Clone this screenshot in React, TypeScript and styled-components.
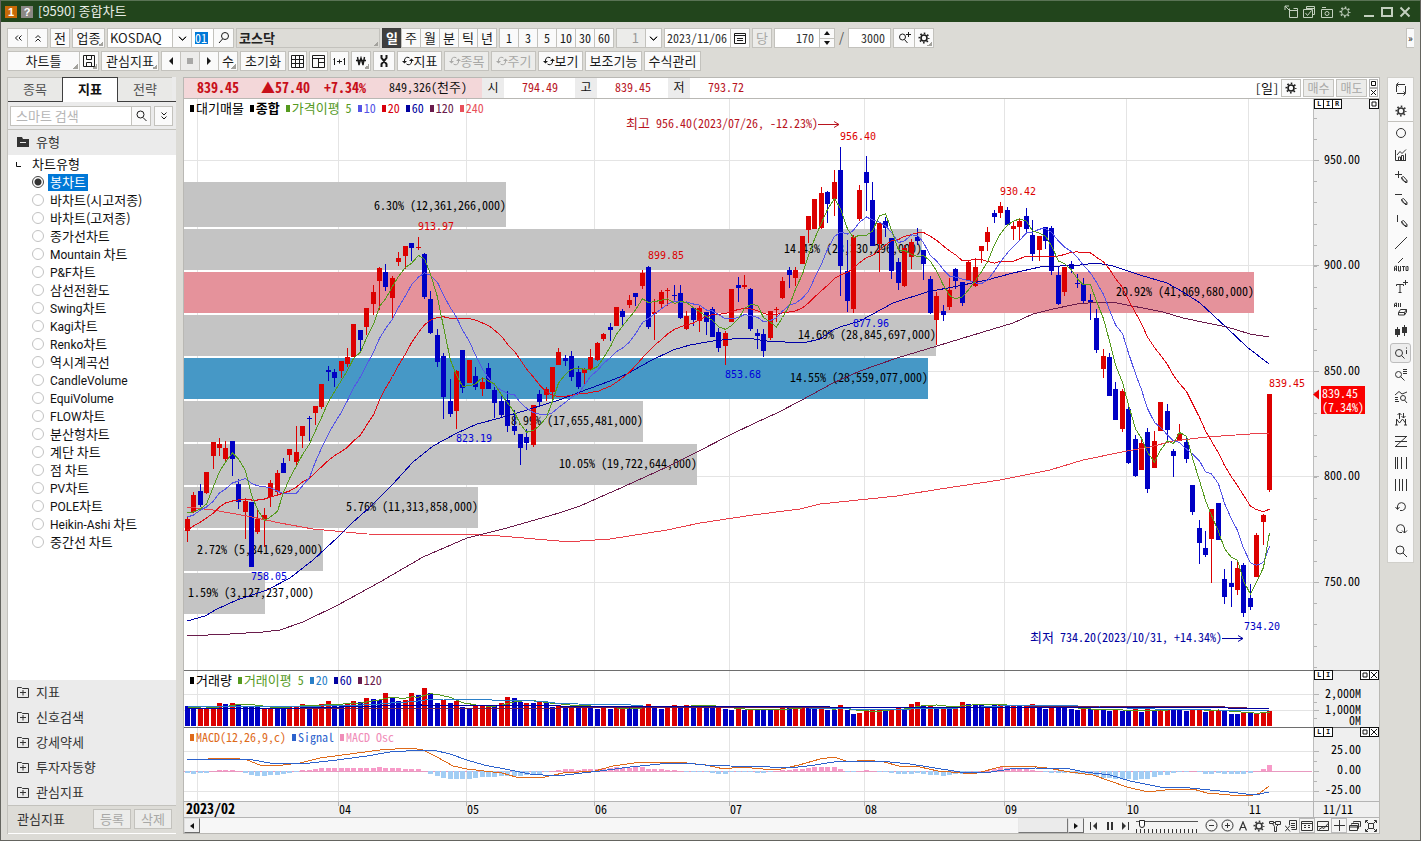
import React, { useState } from 'react';
import styled, { createGlobalStyle, css } from 'styled-components';

const ui = '"Noto Sans CJK KR", "Noto Sans", sans-serif';
const mono = '"Noto Sans Mono CJK KR", "Noto Sans CJK KR", "Liberation Mono", monospace';
const small = '"DejaVu Sans Mono", "Liberation Mono", monospace';

const RED = '#dc0000';
const BLUE = '#0000c4';

const Global = createGlobalStyle`
  * { box-sizing: border-box; }
  body { margin: 0; background: #dcdbd6; font: 13px/16px ${ui}; color: #111; }
  button, input, select { font: inherit; color: inherit; margin: 0; padding: 0; border-radius: 0; }
  svg { display: block; }
`;

/* ---------- frame ---------- */
const Frame = styled.div`
  display: flex;
  flex-direction: column;
  min-height: 100vh;
  min-width: 1100px;
  border: solid #64645f;
  border-width: 0 1px 1px;
  background: #dcdbd6;
`;
const TitleBar = styled.header`
  display: flex;
  align-items: center;
  gap: 4px;
  height: 22px;
  padding: 0 8px 0 4px;
  border-top: 1px solid #5a7355;
  background: #22451c;
  color: #e8ede6;
`;
const Badge = styled.span<{ $bg: string }>`
  width: 12px;
  height: 12px;
  background: ${p => p.$bg};
  color: #fff;
  font: bold 11px/12px "Liberation Sans", sans-serif;
  text-align: center;
`;
const Title = styled.h1`
  margin: 0 auto 0 1px;
  padding-bottom: 2px;
  font-size: 13px;
  line-height: 18px;
  font-weight: 400;
`;
const TitleButton = styled.button`
  display: grid;
  place-items: center;
  width: 14px;
  height: 20px;
  border: 0;
  background: none;
  color: #c3d0bf;
`;
const Spacer = styled.span`width: 2px;`;

/* ---------- tool bars ---------- */
const Bars = styled.div`
  display: flex;
  flex-direction: column;
  gap: 3px;
  padding: 6px 6px 6px;
`;
const Bar = styled.div`
  display: flex;
  gap: 2px;
  height: 20px;
`;
const Group = styled.div`
  display: flex;
  & > * + * { margin-left: -1px; }
`;
const corner = css`
  background-image: linear-gradient(135deg, transparent 50%, #a3a29d 50%);
  background-size: 5px 5px;
  background-position: right 1px bottom 1px;
  background-repeat: no-repeat;
`;
const Tool = styled.button<{ $w?: number; $on?: boolean; $menu?: boolean; $dim?: boolean }>`
  display: flex;
  align-items: center;
  justify-content: center;
  flex: none;
  width: ${p => p.$w ?? 20}px;
  height: 20px;
  border: 1px solid ${p => (p.$on ? '#3c3c3c' : '#c3c2bd')};
  background-color: ${p => (p.$on ? '#3f3f3f' : p.$dim ? '#ececea' : '#fafafa')};
  color: ${p => (p.$on ? '#fff' : p.$dim ? '#a8a8a6' : '#1a1a1a')};
  font-weight: ${p => (p.$on ? 700 : 400)};
  line-height: 18px;
  white-space: nowrap;
  ${p => p.$menu && corner}
`;
const NumTool = styled(Tool)`font: 12px/18px ${mono};`;
const Field = styled.input<{ $w: number; $right?: boolean; $dim?: boolean }>`
  width: ${p => p.$w}px;
  height: 20px;
  padding: 0 ${p => (p.$right ? 5 : 2)}px 2px;
  border: 1px solid #c3c2bd;
  background: ${p => (p.$dim ? '#ececea' : '#fff')};
  color: #333;
  font: 12px/16px ${mono};
  text-align: ${p => (p.$right ? 'right' : 'left')};
  outline: 0;
`;
const NameField = styled(Field)`
  background-color: #dddcd7;
  color: #222;
  font: bold 13px/16px ${ui};
  ${corner}
`;
const Combo = styled.div<{ $w: number; $dim?: boolean }>`
  display: flex;
  align-items: center;
  width: ${p => p.$w}px;
  height: 20px;
  border: 1px solid #c3c2bd;
  background: #fff;
  select {
    flex: 1;
    min-width: 0;
    height: 18px;
    padding: 0 6px 1px 2px;
    border: 0;
    appearance: none;
    background: ${p => (p.$dim ? '#ececea' : '#fff')};
    color: ${p => (p.$dim ? '#9a9a98' : '#222')};
    text-align-last: ${p => (p.$dim ? 'right' : 'left')};
    font: 13px/17px ${ui};
    outline: 0;
  }
`;
const Drop = styled.span<{ $w: number }>`
  display: grid;
  place-items: center;
  width: ${p => p.$w}px;
  height: 18px;
  border-left: 1px solid #c3c2bd;
  background: #fafafa;
`;
const CodeField = styled(Field)`
  padding: 0 3px 2px;
  background: linear-gradient(#0078d7, #0078d7) 3px 3px / 13px 12px no-repeat #fff;
  color: #fff;
`;
const Spin = styled.div`
  display: flex;
  flex-direction: column;
  width: 16px;
  height: 20px;
  border: 1px solid #c3c2bd;
  background: #fafafa;
  button {
    flex: 1;
    display: grid;
    place-items: center;
    border: 0;
    background: none;
  }
  button + button { border-top: 1px solid #c3c2bd; }
`;
const Slash = styled.span`
  width: 9px;
  color: #555;
  font: 13px/18px ${ui};
  text-align: center;
`;
const More = styled.button`
  width: 8px;
  height: 20px;
  margin-left: auto;
  border: 1px solid #c3c2bd;
  border-right: 0;
  background: #fafafa;
  font-size: 10px;
  line-height: 16px;
`;

/* ---------- body ---------- */
const Body = styled.main`
  display: flex;
  align-items: stretch;
  flex: 1;
  gap: 7px;
  padding: 0 6px 6px;
`;
const Side = styled.aside`
  display: flex;
  flex-direction: column;
  flex: none;
  width: 169px;
  border-left: 1px solid #c3c2bd;
  background: #ebebeb;
`;
const Tabs = styled.div`
  display: flex;
  flex: none;
  height: 25px;
  padding-right: 4px;
  background: linear-gradient(#3f3f3f, #3f3f3f) bottom / 100% 1px no-repeat;
`;
const Tab = styled.button<{ $on?: boolean }>`
  flex: 1;
  height: ${p => (p.$on ? 25 : 24)}px;
  padding-bottom: 2px;
  border: solid ${p => (p.$on ? '#3f3f3f' : '#c3c2bd')};
  border-width: ${p => (p.$on ? '1px 1px 0' : '1px 0 0')};
  background: ${p => (p.$on ? '#fff' : '#e9e9e7')};
  color: ${p => (p.$on ? '#111' : '#555')};
  font-weight: ${p => (p.$on ? 700 : 400)};
`;
const SearchRow = styled.div`
  display: flex;
  flex: none;
  gap: 3px;
  padding: 4px 3px 4px 2px;
  height: 28px;
  border-bottom: 1px solid #c3c2bd;
`;
const SearchField = styled(Field)`
  flex: 1;
  min-width: 0;
  padding-left: 5px;
  font: 13px/16px ${ui};
  &::placeholder { color: #b5b5b5; }
`;
const SearchGroup = styled(Group)`flex: 1; min-width: 0;`;
const Fold = styled.button`
  display: flex;
  align-items: center;
  flex: none;
  gap: 6px;
  height: 25px;
  padding: 0 0 2px 8px;
  border: 0;
  background: #ebebeb;
  color: #333;
  text-align: left;
  svg { margin: 0 1px; }
`;
const Tree = styled.fieldset`
  flex: 1;
  margin: 0;
  padding: 0;
  border: 0;
  background: #fff;
`;
const Root = styled.legend`
  display: flex;
  align-items: center;
  gap: 11px;
  float: left;
  width: 100%;
  height: 18px;
  padding: 0 0 0 8px;
`;
const Choice = styled.label`
  display: flex;
  align-items: center;
  clear: both;
  height: 18px;
  padding: 0 0 0 24px;
  input {
    width: 12px;
    height: 12px;
    margin: 0 4px 0 0;
    border: 1px solid #c2c2c2;
    border-radius: 50%;
    appearance: none;
    background: #fff;
  }
  input:checked {
    border-color: #444;
    background: radial-gradient(circle, #333 0 3px, #fff 4px);
  }
  input:checked + span { background: #0078d7; color: #fff; }
`;
const ChoiceText = styled.span`
  height: 17px;
  padding: 0 2px;
  line-height: 15px;
`;
const Latin = styled.span`font: 12px/0 Roboto, sans-serif;`;
const SideFoot = styled.div`
  display: flex;
  align-items: center;
  flex: none;
  gap: 3px;
  height: 29px;
  padding: 0 4px 2px 9px;
  border-top: 1px solid #c3c2bd;
  border-bottom: 1px solid #fff;
  background: #dddcd7;
  color: #333;
  span { margin-right: auto; }
`;

/* ---------- chart panel ---------- */
const Panel = styled.section`
  display: flex;
  flex-direction: column;
  flex: 1;
  min-width: 0;
  border: 1px solid #b9b8b4;
  background: #fff;
`;
const Quote = styled.div`
  display: flex;
  flex: none;
  height: 21px;
  border-bottom: 1px solid #b9b8b4;
  font: 12px/18px ${mono};
`;
const Last = styled.div`
  display: flex;
  padding-right: 15px;
  background: #f3d7d9;
`;
const Big = styled.b<{ $w: number }>`
  width: ${p => p.$w}px;
  color: #c8101a;
  font-size: 14px;
  line-height: 18px;
  text-align: right;
`;
const Vol = styled.span`width: 101px; text-align: right;`;
const QLabel = styled.span`width: 22px; background: #ececec; text-align: center;`;
const QValue = styled.span`width: 71px; padding-right: 17px; color: #b8141e; text-align: right;`;
const QuoteTools = styled.div`
  display: flex;
  align-items: center;
  gap: 2px;
  margin-left: auto;
  padding-right: 1px;
  button { height: 18px; line-height: 16px; }
`;
const Stack = styled.div`
  display: flex;
  flex-direction: column;
  width: 9px;
  && button {
    display: grid;
    place-items: center;
    height: 9px;
    border: 1px solid #b0b0b0;
    background: #fff;
  }
`;
const Pane = styled.div`
  position: relative;
  flex: none;
  & > svg { width: 100%; height: auto; overflow: visible; }
`;
const Legend = styled.div<{ $top: number }>`
  position: absolute;
  top: ${p => p.$top}px;
  left: 6px;
  display: flex;
  gap: 6px;
  font: 12px/16px ${mono};
`;
const KeyBox = styled.span<{ $c: string; $b?: boolean }>`
  display: flex;
  align-items: center;
  gap: 2px;
  color: ${p => p.$c};
  font-weight: ${p => (p.$b ? 700 : 400)};
  &::before { content: ''; width: 4px; height: 7px; background: ${p => p.$c}; }
`;
const KeyText = styled.span`white-space: pre;`;
const Hangul = styled.span`font-size: 13px;`;
const Key = ({ children, ...rest }: { children: string; $c: string; $b?: boolean }) => (
  <KeyBox {...rest}>
    <KeyText>{children.split(/([가-힣]+)/).map((part, i) => (i % 2 ? <Hangul key={i}>{part}</Hangul> : part))}</KeyText>
  </KeyBox>
);
const Mini = styled.div<{ $end?: boolean }>`
  position: absolute;
  top: 0;
  ${p => (p.$end ? 'right: 0;' : 'left: 94.56%;')}
  display: flex;
  button {
    display: grid;
    place-items: center;
    width: 10px;
    height: 10px;
    border: 1px solid #111;
    background: #fff;
    font: bold 7px/8px ${small};
  }
  button + button { margin-left: -1px; }
`;
const Foot = styled.div`
  display: flex;
  align-items: center;
  flex: none;
  height: 15px;
  background: #f4f4f3;
`;
const ScrollButton = styled.button`
  display: grid;
  place-items: center;
  width: 16px;
  height: 15px;
  border: 1px solid;
  border-color: #e0e0e0 #6c6c6c #6c6c6c #e0e0e0;
  background: #f0f0f0;
`;
const Track = styled.div`
  display: flex;
  justify-content: flex-end;
  flex: 1;
  height: 15px;
  background: #f7f7f7;
`;
const Thumb = styled.div`
  width: 50px;
  height: 15px;
  border: 1px solid;
  border-color: #e8e8e8 #777 #777 #e8e8e8;
  background: #ebebeb;
`;
const FootTools = styled.div`
  display: flex;
  align-items: center;
`;
const FootButton = styled.button<{ $on?: boolean; $w?: number }>`
  display: grid;
  place-items: center;
  width: ${p => p.$w ?? 16}px;
  height: 15px;
  border: ${p => (p.$on ? '1px solid #bbb' : '0')};
  background: none;
  color: #333;
`;
const Ruler = styled.label`
  display: flex;
  flex-direction: column;
  width: 62px;
  height: 15px;
  margin: 0 5px 0 3px;
  background: repeating-linear-gradient(90deg, #333 0 1px, transparent 1px 4px) 0 11px / 100% 4px no-repeat;
  input {
    width: 62px;
    height: 11px;
    appearance: none;
    background: linear-gradient(#555, #555) 0 3px / 100% 1px no-repeat;
  }
  input::-webkit-slider-thumb {
    width: 6px;
    height: 8px;
    appearance: none;
    border: 1px solid #222;
    border-radius: 0 0 3px 3px;
    background: #fff;
  }
`;
const Strip = styled.nav`
  display: flex;
  flex-direction: column;
  align-self: flex-start;
  width: 27px;
  border: 1px solid #d0cfca;
  background: #fafafa;
`;
const StripButton = styled.button<{ $on?: boolean; $rule?: boolean }>`
  display: grid;
  place-items: center;
  height: ${p => (p.$on ? 20 : 22)}px;
  margin: ${p => (p.$on ? '1px 2px' : '0')};
  border: ${p => (p.$on ? '1px solid #bdbdbd' : '0')};
  ${p => p.$rule && 'border-bottom: 1px solid #c3c2bd;'}
  border-radius: ${p => (p.$on ? 3 : 0)}px;
  background: ${p => (p.$on ? '#ededed' : 'none')};
  color: #333;
`;

/* ---------- icons ---------- */
const Icon = ({ d, f, s = 16, w = 1 }: { d?: string; f?: string; s?: number; w?: number }) => (
  <svg width={s} height={s} viewBox={`0 0 ${s} ${s}`} fill="none" stroke="currentColor" strokeWidth={w} aria-hidden="true">
    {d && <path d={d} />}
    {f && <path d={f} fill="currentColor" stroke="none" />}
  </svg>
);
const Gear = ({ thin }: { thin?: boolean }) => (
  <svg width="12" height="12" viewBox="0 0 12 12" fill="none" stroke="currentColor" aria-hidden="true">
    <circle cx="6" cy="6" r={thin ? 3.5 : 3} strokeWidth={thin ? 1 : 1.6} />
    <circle cx="6" cy="6" r="4.7" strokeWidth="1.6" strokeDasharray="1.6 2.09" strokeDashoffset="0.8" />
  </svg>
);
const Chevron = () => <Icon s={9} w={1} d="M1 3l3.5 3.5L8 3M1 2.5L4.5 6 8 2.5" />;
const Lens = () => <Icon s={14} d="M10 5.5a3.5 3.5 0 1 1-7 0a3.5 3.5 0 1 1 7 0zM9 8.5l3.5 3.5" />;
const Cycle = () => <Icon s={12} w={1} f="M0 6h5L2.5 8.500zM7 6h5L9.500 3.500z" d="M2.500 6V5a3 3 0 0 1 5-2M9.500 6v1a3 3 0 0 1-5 2" />;

/* ---------- data ---------- */
type Bar4 = [number, number, number, number?, number?];
/* Each run lists [up, body top, body bottom, high, low] in thirds of a unit below its base line. */
const runs: [number, Bar4[]][] = [
  [200, [
    [1, 957, 992, 950, 1025], [1, 885, 935, 875, 938], [0, 873, 914, 852, 920], [1, 816, 878, 816, 882], [1, 726, 767, 726, 806],
    [1, 733, 743, 713, 768], [1, 744, 776, 724, 782], [0, 723, 776, 723, 827], [0, 852, 905, 838, 926], [1, 903, 935, 900, 1016],
    [0, 906, 1100], [1, 957, 996, 930, 1002], [1, 945, 960, 925, 1042], [1, 849, 892, 840, 922], [1, 819, 877, 809, 882],
    [0, 789, 818, 774], [1, 747, 765, 747, 784], [1, 756, 786, 678, 796], [1, 679, 707, 679, 745], [0, 655, 658, 647, 722],
    [1, 619, 638, 619, 674], [1, 552, 620, 552, 627], [0, 511, 515, 497, 542], [0, 516, 533, 507, 562], [1, 484, 513, 484, 533],
    [1, 472, 492, 443, 501], [1, 373, 470], [0, 390, 419, 390, 458], [1, 324, 380, 324, 405], [1, 276, 311, 256, 345],
    [1, 204, 242, 200, 330], [0, 216, 260, 192, 272], [1, 234, 293, 228, 354], [1, 174, 185, 155, 198], [1, 139, 167, 139, 206],
    [0, 129, 144, 129, 182], [1, 140, 143, 110, 150], [0, 162, 290, 158, 298], [0, 297, 398, 272, 402], [0, 405, 486, 387, 500],
    [0, 468, 590, 459, 657], [0, 603, 641, 536, 651], [1, 513, 632, 510, 686], [0, 450, 563, 450, 580], [1, 480, 548],
    [0, 528, 560, 500, 569], [1, 546, 567, 532, 587], [0, 504, 566, 489], [0, 570, 608, 562, 655], [0, 603, 644, 584, 655],
    [0, 600, 677, 572, 695], [0, 678, 692, 630, 705], [0, 702, 743, 702, 795], [0, 711, 728, 688, 750], [1, 615, 734, 615, 740],
    [0, 582, 606, 571, 618], [1, 567, 584, 562, 602], [1, 501, 577, 501, 600], [1, 456, 494, 443],
  ]],
  [220, [
    [0, 414, 423, 405, 438], [0, 408, 470, 392, 482], [0, 456, 500, 437, 508], [1, 447, 458, 443, 492], [1, 411, 446, 388, 452],
    [1, 369, 419, 366, 423], [1, 342, 356, 338, 364], [0, 321, 329, 308, 362], [1, 261, 317], [0, 273, 290, 268, 320],
    [1, 240, 254, 224, 263], [0, 219, 230, 219, 257], [1, 159, 197, 150, 207], [0, 141, 320, 138, 326], [1, 276, 283, 238, 360],
    [1, 216, 252, 210, 268], [1, 211, 213, 204, 257], [0, 226, 228, 195, 243], [0, 219, 293, 195, 297], [1, 288, 326, 273, 331],
    [0, 264, 299, 262, 318], [1, 264, 302, 256, 335], [0, 276, 305, 276, 344], [0, 267, 350, 262], [0, 336, 383, 325, 396],
    [1, 339, 377, 332, 434], [1, 207, 305], [0, 195, 203, 170, 245], [1, 195, 200, 165, 208], [0, 207, 326, 203, 334],
    [0, 339, 347, 326, 388], [0, 342, 392, 328, 411], [1, 273, 353, 273, 359], [1, 267, 271, 262, 305], [1, 183, 233, 170, 238],
    [0, 150, 164, 142, 203],
  ]],
  [110, [
    [1, 480, 503, 472, 527], [1, 378, 461], [1, 318, 360, 318, 398], [1, 267, 356], [1, 249, 353, 232, 357],
    [0, 246, 281, 242, 338], [1, 216, 266, 180, 318], [0, 180, 467, 110, 558], [0, 483, 572, 390, 605], [1, 381, 597, 376, 610],
    [1, 240, 326, 226, 332], [0, 186, 218, 138, 302], [0, 270, 407, 216], [1, 339, 401, 339, 486], [0, 333, 353, 322, 380],
    [0, 384, 482, 384, 506], [0, 456, 518, 445, 540], [1, 414, 527, 405, 532], [1, 396, 440, 388, 476], [0, 381, 392, 354, 404],
    [0, 420, 461, 420, 509], [0, 507, 608, 498, 612], [1, 558, 629, 545, 705], [0, 603, 614, 585, 632], [1, 540, 591, 504, 600],
    [0, 477, 512, 473, 536], [0, 516, 578, 516, 587], [1, 456, 513, 450], [1, 471, 527, 450, 532], [1, 408, 422, 408, 458],
    [1, 366, 395, 351, 422], [0, 310, 320, 300, 338], [1, 288, 308, 277, 324], [0, 300, 344, 292], [1, 348, 357, 332, 390],
    [1, 333, 350, 325, 392], [0, 318, 356, 294, 368], [0, 375, 432, 330, 452], [1, 378, 419, 378, 452], [0, 351, 392, 351, 417],
    [0, 354, 482, 348, 496], [0, 495, 581, 472, 586], [1, 471, 545, 471, 557], [0, 462, 476, 454, 488], [0, 519, 523, 492, 533],
    [0, 522, 572, 505, 580], [0, 570, 579, 552, 630], [0, 624, 719, 598, 728], [1, 738, 776, 717, 803], [0, 741, 857, 729],
  ]],
  [240, [
    [0, 447, 539, 426], [1, 453, 566, 448, 576], [0, 507, 668, 500, 673], [0, 597, 707, 586, 711], [1, 609, 689, 597],
    [0, 576, 746, 564, 759], [1, 603, 683, 573], [1, 486, 572], [0, 513, 569, 492, 602], [0, 633, 648, 627, 711],
    [1, 582, 602, 552], [0, 606, 657, 590, 669], [0, 735, 815, 735, 824], [0, 864, 908, 840, 971], [0, 924, 944, 872, 951],
    [1, 807, 897, 807, 1029], [0, 789, 899], [0, 1017, 1071, 988, 1091], [0, 1029, 1041, 962, 1101], [1, 984, 1049, 962, 1065],
    [0, 975, 1118, 969, 1131], [0, 1074, 1101, 1032, 1110], [1, 885, 1010, 879], [1, 825, 846, 822, 914], [1, 462, 749, 462, 755],
  ]],
];
const candles = runs.flatMap(([base, rows]) =>
  rows.map(([up, a, b, h = a, l = b]) => {
    const y = (v: number) => Math.round(base + v / 3);
    return { up: !!up, top: y(a), bottom: y(b), high: y(h), low: y(l), close: base + (up ? a : b) / 3 };
  }),
);
const X = (i: number) => Math.round(187 + 6.403 * i);
const mean = (list: number[], n: number, lead: number[]) =>
  list.map((_, i) => (i < n - 1 && i < lead.length ? lead[i] : list.slice(Math.max(0, i - n + 1), i + 1).reduce((a, b) => a + b, 0) / Math.min(n, i + 1)));
const trace = (ys: number[]) => ys.map((y, i) => `${X(i) + 0.5},${y.toFixed(1)}`).join(' ');
const closes = candles.map(c => c.close);
const ma5 = trace(mean(closes, 5, [513, 512, 509, 504]));
const ma10 = trace(mean(closes, 10, [517, 515, 510, 507, 501, 493, 489, 483, 481]));
const ma20 = trace(mean(closes, 20, [530, 526, 522, 518, 513, 507, 503, 501, 500, 499, 500, 500, 499, 497, 495, 493, 491, 487, 482]));
const ma60 = '187,621 205,616 217,609 237,600 267,590 290,578 313,560 338,537 352,523 370,507 393,484 413,462 433,446 457,433 477,424 500,418 527,410 559,400 580,392 610,381 627,374 650,361 673,350 690,345 713,341 732,339 747,338 767,341 803,343 820,339 833,330 840,327 860,321 893,303 927,292 953,287 987,280 1013,273 1040,267 1060,266 1080,265 1097,263 1113,266 1140,275 1167,283 1183,292 1200,303 1227,328 1247,347 1269,364';
const ma120 = '187,636 230,634 263,632 280,630 303,622 338,605 380,582 423,557 467,538 507,528 559,513 580,506 623,487 667,467 697,452 730,435 757,422 777,413 800,401 833,383 860,371 897,358 937,346 960,339 993,329 1013,323 1033,314 1053,309 1077,304 1100,302 1117,303 1163,312 1183,318 1207,323 1227,327 1250,334 1269,337';
const ma240 = '187,507 213,510 247,516 280,523 313,529 367,534 480,535 500,536 559,541 580,541 610,539 667,530 700,523 753,515 800,509 820,504 897,496 940,489 1000,480 1050,470 1083,460 1127,451 1150,447 1173,441 1207,437 1250,434 1269,433';

const profile: [number, number, number, string, string?][] = [
  [182, 45, 506, '6.30% (12,361,266,000)'],
  [229, 41, 922, '14.43% (28,330,296,000)'],
  [272, 41, 1254, '20.92% (41,069,680,000)', '#e5929b'],
  [315, 41, 936, '14.69% (28,845,697,000)'],
  [358, 41, 928, '14.55% (28,559,077,000)', '#4698c6'],
  [401, 41, 643, '8.99% (17,655,481,000)'],
  [444, 41, 697, '10.05% (19,722,644,000)'],
  [487, 41, 478, '5.76% (11,313,858,000)'],
  [530, 41, 323, '2.72% (5,341,629,000)'],
  [573, 41, 265, '1.59% (3,127,237,000)'],
];
const months: [number, string][] = [[338, '04'], [466, '05'], [594, '06'], [729, '07'], [864, '08'], [1004, '09'], [1126, '10'], [1248, '11']];
const verticals = [197, ...months.map(m => m[0])];
const levels: [number, string][] = [[160, '950.00'], [265, '900.00'], [371, '850.00'], [476, '800.00'], [582, '750.00']];
const marks: [number, number, string, string][] = [
  [840, 140, '956.40', RED], [418, 230, '913.97', RED], [648, 259, '899.85', RED], [1000, 195, '930.42', RED], [1269, 387, '839.45', RED],
  [251, 580, '758.05', '#0000dc'], [456, 442, '823.19', '#0000dc'], [725, 378, '853.68', '#0000dc'], [853, 327, '877.96', '#0000dc'], [1244, 630, '734.20', BLUE],
];

/* Positive heights are rising volume, negative ones falling. */
const volume = [
  -19, -19, 16, 16, 17, 22, -21, 22, -20, -19, -19, -19, 17, 16, -19, -19, 19, 19, 21, -19, 18, 21, 24, -21, -20, 21, 24, -23, 27, -26, -25, 32, -28, -24, 25, 32, -30,
  37, -32, -22, 25, -22, 24, -18, -17, 19, 19, 20, -19, 22, 28, -27, -23, 22, -22, 23, -23, -18, 20, -19, 19, -19, 20, -18, -16, 18, -16, 17, 17, -17, -17, 17, 21,
  -18, -16, 18, 20, -19, 20, -19, 20, -19, -18, 18, -16, -15, 16, -15, 16, -16, -15, -15, 16, 17, -17, 17, 18, -17, -16, 16, -15, -15, 20, -15, -11, 12, 14, 15, 16,
  -15, 16, 17, -16, 21, 23, -19, 19, -18, 18, -18, 19, 23, -21, -20,
  -20, 19, -21, 21, -19, 19, -19, 19, 21, -19, -16, 18, -19, -17, -16, -15, 16, -16, 16, -15, -14, 16, -14, -14, 16, -13, 16, -14, 16, 16, -16, -15, -14, 16, 16, -13,
  15, 15, -14, -11, -11, 13, -12, 12, 13, 14,
];
const volTop = volume.map(v => 725 - Math.abs(v));
const vma5 = trace(mean(volTop, 5, [707, 707, 708, 708]));
const vma20 = trace(mean(volTop, 20, Array(19).fill(706)));
const vma60 = '187,708 300,708 420,705 560,706 760,706 900,708 1000,707 1228,708 1269,709';
const vma120 = '187,709 400,708 560,708 800,707 960,708 1100,706 1225,707 1269,709';

const osc = [
  -2, -3, -2, -2, 0, 1, 1, 1, 0, -2, -4, -5, -5, -4, -4, -3, -2, -1, 1, 1, 2, 3, 3, 3, 3, 3, 3, 3, 3, 3, 4, 3, 3, 3, 2, 2, 2, 0, -3, -5, -7, -8, -8, -8, -8, -7, -6, -6, -6,
  -5, -5, -5, -5, -4, -4, -3, -1, 0, 1, 2, 2, 1, 2, 2, 2, 3, 3, 4, 3, 3, 4, 4, 2, 2, 2, 1, 1, 0, -1, -1, -1, -1, -2, -3, -3, -1, -1, -1, -1, -2, -2, -1, 0, 1, 1, 2, 2, 3, 4,
  4, 4, 4, 2, -1, -1, 0, 1, 0, -1, -1, -2, -3, -3, -3, -2, -3, -4, -4, -5, -4, -3, -3, -2, -1, 0, 1, 2, 4, 3, 2, 3, 3, 1, 0, -1, -2, -2, -2, -2, -3, -3, -4, -5, -7, -7, -8, -8,
  -8, -9, -8, -8, -6, -4, -4, -2, -1, -1, 0, -1, -3, -3, -2, -3, -3, -3, -3, -2, 0, 2, 6,
];
const macd = '187,759 200,760 217,758 233,758 247,760 260,765 283,765 300,763 320,758 350,754 380,750 410,748 423,750 437,757 453,766 467,769 484,771 502,773 516,777 527,778 545,777 563,773 595,771 613,766 641,762 677,762 706,765 724,769 741,767 763,769 781,769 799,765 820,759 834,757 849,762 866,760 884,762 899,766 920,767 938,771 963,773 977,773 1000,767 1027,766 1047,768 1070,772 1093,775 1110,781 1127,787 1148,792 1173,789 1193,789 1207,793 1230,795 1250,796 1260,793 1269,786';
const signal = '187,759 213,759 247,759 270,763 290,764 310,763 337,760 367,756 390,752 423,750 433,750 450,754 467,760 484,765 510,770 530,774 556,776 600,771 630,767 660,764 684,763 705,765 730,766 770,767 790,768 815,765 840,761 880,761 910,764 935,768 960,772 985,773 1010,769 1035,768 1070,769 1085,772 1110,775 1130,781 1160,787 1190,788 1220,791 1255,795 1269,792';

/* ---------- chart pieces ---------- */
const ChartText = styled.text`
  font: 12px ${mono};
  white-space: pre;
`;
const ChartHangul = styled.tspan`font-size: 13px;`;
const MarkText = styled.text`font: 10px ${small};`;
const DateBold = styled(ChartText)`font-size: 14px; font-weight: 700;`;

const Canvas = ({ y, h, label, rows, children }: { y: number; h: number; label: string; rows: number[]; children: React.ReactNode }) => (
  <svg viewBox={`184 ${y} 1195 ${h}`} role="img" aria-label={label}>
    <g stroke="#e4e4e4" shapeRendering="crispEdges">
      {verticals.map(x => <path key={x} d={`M${x}.5 ${y}v${h}`} />)}
      {rows.map(r => <path key={r} d={`M184 ${r}.5h1130`} />)}
    </g>
    {children}
  </svg>
);
const AxisBack = ({ y, h }: { y: number; h: number }) => (
  <>
    <rect x="1314" y={y} width="65" height={h} fill="#efefef" />
    <path d={`M1313.5 ${y}v${h}`} stroke="#bcbcbc" />
  </>
);
const Line = ({ p, c }: { p: string; c: string }) => <polyline points={p} fill="none" stroke={c} strokeWidth="1" shapeRendering="crispEdges" />;
const Top = ({ y }: { y: number }) => <path d={`M184 ${y}.5h1195`} stroke="#6e6e6e" shapeRendering="crispEdges" />;

const PriceChart = () => (
  <Canvas y={99} h={571} label="코스닥 일봉" rows={levels.map(l => l[0])}>
    {profile.map(([y, h, end, , c = '#c4c4c4']) => <rect key={y} x="184" y={y} width={end - 184} height={h} fill={c} />)}
    {profile.map(([y, h, end, text]) =>
      end < 300
        ? <ChartText key={y} x="188" y={y + h - 17}>{text}</ChartText>
        : <ChartText key={y} x={end} y={y + h - 17} textAnchor="end">{text}</ChartText>,
    )}
    <g shapeRendering="crispEdges">
      {candles.map((c, i) => (
        <g key={i} fill={c.up ? RED : BLUE}>
          <rect x={X(i)} y={c.high} width="1" height={Math.max(1, c.low - c.high)} />
          <rect x={X(i) - 2} y={c.top} width="5" height={Math.max(1, c.bottom - c.top)} />
        </g>
      ))}
    </g>
    <Line p={ma240} c="#e8404a" />
    <Line p={ma120} c="#6a1c4c" />
    <Line p={ma60} c="#0000a8" />
    <Line p={ma20} c="#e00a14" />
    <Line p={ma10} c="#5555e6" />
    <Line p={ma5} c="#559a1e" />
    {marks.map(([x, y, t, c]) => <MarkText key={t} x={x} y={y} fill={c}>{t}</MarkText>)}
    <ChartText x="626" y="128" fill="#b8141e"><ChartHangul>최고</ChartHangul> 956.40(2023/07/26, -12.23%)</ChartText>
    <path d="M818 124.5h21M834 121.5l5 3l-5 3" fill="none" stroke="#b8141e" />
    <ChartText x="1030" y="642" fill="#0000a0"><ChartHangul>최저</ChartHangul> 734.20(2023/10/31, +14.34%)</ChartText>
    <path d="M1222 638.5h21M1238 635.5l5 3l-5 3" fill="none" stroke="#0000a0" />
    <AxisBack y={99} h={571} />
    <g stroke="#b4b4b4" shapeRendering="crispEdges">
      {Array.from({ length: 27 }, (_, i) => Math.round(118 + i * 21.1)).filter(y => y < 668).map(y => <path key={y} d={`M1314 ${y}.5h3`} />)}
      {levels.map(([y]) => <path key={y} d={`M1314 ${y}.5h5`} />)}
    </g>
    {levels.map(([y, t]) => <ChartText key={t} x="1324" y={y + 4}>{t}</ChartText>)}
    <path d="M1313 394.5l6-5v10z" fill="#f00000" />
    <rect x="1321" y="386" width="44" height="28" fill="#fa0000" />
    <ChartText x="1322" y="398" fill="#fff">839.45</ChartText>
    <ChartText x="1322" y="412" fill="#fff">(7.34%)</ChartText>
  </Canvas>
);

const VolumeChart = () => (
  <Canvas y={670} h={57} label="거래량" rows={[694, 710]}>
    <g shapeRendering="crispEdges">
      {volume.map((v, i) => <rect key={i} x={X(i) - 2} y={725 - Math.abs(v)} width="5" height={Math.abs(v) + 1} fill={v > 0 ? RED : BLUE} />)}
    </g>
    <Line p={vma5} c="#559a1e" />
    <Line p={vma20} c="#2a7fc8" />
    <Line p={vma120} c="#6a1c4c" />
    <Line p={vma60} c="#0000a0" />
    <AxisBack y={670} h={57} />
    <path d="M1314 694.5h5M1314 710.5h5M1314 702.5h3M1314 718.5h3" stroke="#b4b4b4" />
    <ChartText x="1361" y="698" textAnchor="end">2,000M</ChartText>
    <ChartText x="1361" y="714" textAnchor="end">1,000M</ChartText>
    <ChartText x="1361" y="725" textAnchor="end">0M</ChartText>
    <Top y={670} />
  </Canvas>
);

const MacdChart = () => (
  <Canvas y={727} h={74} label="MACD" rows={[751, 791]}>
    <path d="M184 771.5h1128" stroke="#e89ac0" shapeRendering="crispEdges" />
    <g shapeRendering="crispEdges">
      {osc.map((v, i) => <rect key={i} x={X(i) - 2} y={v > 0 ? 771 - v : 771} width="5" height={Math.abs(v)} fill={v > 0 ? '#f79ac8' : '#a2cdf4'} />)}
    </g>
    <Line p={macd} c="#de6a1a" />
    <Line p={signal} c="#2c62cc" />
    <AxisBack y={727} h={74} />
    <path d="M1314 751.5h5M1314 771.5h5M1314 791.5h5M1314 761.5h3M1314 781.5h3" stroke="#b4b4b4" />
    <ChartText x="1361" y="754" textAnchor="end">25.00</ChartText>
    <ChartText x="1361" y="774" textAnchor="end">0.00</ChartText>
    <ChartText x="1361" y="794" textAnchor="end">-25.00</ChartText>
    <Top y={727} />
  </Canvas>
);

const DateAxis = () => (
  <svg viewBox="184 801 1195 17" role="img" aria-label="날짜">
    <rect x="184" y="801" width="1195" height="17" fill="#efefef" />
    <path d="M184 801.5h1195M184 817.5h1195M1313.5 801v17" stroke="#b4b4b4" />
    <DateBold x="186" y="814">2023/02</DateBold>
    {months.map(([x, t]) => (
      <g key={t}>
        <path d={`M${x}.5 801v5`} stroke="#b4b4b4" />
        <ChartText x={x + 1} y="814">{t}</ChartText>
      </g>
    ))}
    <ChartText x="1323" y="814">11/11</ChartText>
  </svg>
);

const Square = () => <Icon s={8} d="M2 2h4v4h-4z" />;
const Cross = () => <Icon s={8} d="M1 1l6 6M7 1l-6 6" />;
const MiniSet = ({ keys }: { keys: string }) => (
  <Mini>{keys.split('').map(k => <button key={k} type="button">{k}</button>)}</Mini>
);

/* ---------- side lists ---------- */
const kinds = ['봉차트', '바차트(시고저종)', '바차트(고저종)', '종가선차트', 'Mountain 차트', 'P&F차트', '삼선전환도', 'Swing차트', 'Kagi차트', 'Renko차트', '역시계곡선',
  'CandleVolume', 'EquiVolume', 'FLOW차트', '분산형차트', '계단 차트', '점 차트', 'PV차트', 'POLE차트', 'Heikin-Ashi 차트', '중간선 차트'];
const folds = ['지표', '신호검색', '강세약세', '투자자동향', '관심지표'];

const pencil = 'M8.500 8.500l2-1l3.500 4l-2 1.500zM8.500 8.500l.5 2l3 2.500M14 11.500v2h-2';
const stripIcons: [string, React.ReactNode][] = [
  ['새로고침', <Icon d="M3.500 11V5a1.500 1.500 0 0 1 1.500-1.500h7M5.500 1.500l-2 2l2 2M12.500 5v6a1.500 1.500 0 0 1-1.500 1.500H4M10.500 10.500l2 2l-2 2" />],
  ['설정', <Gear />],
  ['원', <Icon d="M12.500 8a4.500 4.500 0 1 1-9 0a4.500 4.500 0 1 1 9 0z" />],
  ['지표 추가', <Icon d="M2.500 3v10.500H13M4 8l3-3.500l2 2l4-4M5.500 13v-3h2v3M8.500 13V8.500h2v4.500M12.500 13V6.500" />],
  ['십자선', <Icon d={`M2 5.500h7M5.500 2v7${pencil}`} />],
  ['수평선', <Icon d={`M2 3.500h7${pencil}`} />],
  ['수직선', <Icon d={`M4.500 2v7${pencil}`} />],
  ['추세선', <Icon d="M2 14L14 2" />],
  ['자동추세선', <Icon d="M5 6l5-5M1.500 14v-4l1-1h1v5M1.500 12h2M5.500 9v5h2V9M9 9.500h3M10.500 9.500V14M13.500 9.500h1.500v4h-2v-4" />],
  ['문자', <Icon d="M3.500 7V5.500h7V7M7 5.500v8M5.500 13.500h3M12.500 1v5M10 3.500h5" />],
  ['모두 지우기', <Icon d="M1.500 6V3l1-1h1v4M1.500 4.500h2M5.500 2v4M7.500 2v4M5.500 11.500l2-3h6l-2 3zM5.500 11.500v2.500h6l2-3V8.500M11.500 11.500V14" />],
  ['봉', <Icon f="M2 6h5v6H2zM9 4h5v6H9zM4 4h1v10H4zM11 2h1v11h-1z" />],
  ['정보', <Icon d="M9.500 8a3.500 3.500 0 1 1-7 0a3.500 3.500 0 1 1 7 0zM8.500 10.500l3 3M13.500 5v4M13.500 2.500v1" />],
  ['목록 조회', <Icon d="M8.500 7.500a3 3 0 1 1-6 0a3 3 0 1 1 6 0zM7.500 9.500l4 4M10 2.500h4M10 4.500h4M10 6.500h4" />],
  ['분석', <Icon d="M2 6l4-3.500l3 2.500l5-2M2 8.500h3M2 10.500h3M2 12.500h4M12.500 9a2.500 2.500 0 1 1-5 0a2.500 2.500 0 1 1 5 0zM11.500 11l2.500 3" />],
  ['패턴', <Icon d="M3.500 14V8l3 4l3-4l3 4V8v6M2 14h3M11 14h3M6.500 8V2M4.500 4l2-2l2 2M10.500 2v5M8.500 5l2 2l2-2" />],
  ['되돌림', <Icon d="M2 3.500h12M2 8.500h12M2 13.500h12M13 4L3 13" />],
  ['주기선', <Icon d="M2.500 2v12M4.500 2v12M8.500 2v12M13.500 2v12" />],
  ['등간격선', <Icon d="M2.500 2v12M6.500 2v12M9.500 2v12M13.500 2v12" />],
  ['실행 취소', <Icon d="M4.500 10V7a4 4 0 1 1 5 4.500H7M2.500 8l2 2.500l2-2.500" />],
  ['다시 실행', <Icon d="M9 11.500H6.500A4 4 0 1 1 11.500 7v5M9 9.500l2.500 2.500L14 9.500" />],
  ['돋보기', <Icon d="M11 7a4 4 0 1 1-8 0a4 4 0 1 1 8 0zM10 10l4 4" />],
];

export default function App() {
  const [kind, setKind] = useState('봉차트');
  return (
    <>
      <Global />
      <Frame>
        <TitleBar>
          <Badge $bg="#c86a08">1</Badge>
          <Badge $bg="#8c8884">?</Badge>
          <Title>[9590] 종합차트</Title>
          <TitleButton aria-label="창 분리"><Icon s={14} d="M5.500 3.500v9h8v-9h-4M5.500 5.500h8M1 5V1h4M1 1l4 4" /></TitleButton>
          <TitleButton aria-label="고정"><Icon s={14} d="M4.500 4V1.500h8v8h-2M1.500 4.500h9v8h-9zM3.500 8l2 2.500l4-5M4.500 3.500h8" /></TitleButton>
          <TitleButton aria-label="화면 저장"><Icon s={14} d="M1.500 4.500h11v8h-11zM2 2.500h4M9 8.500a2 2 0 1 1-4 0a2 2 0 1 1 4 0z" /></TitleButton>
          <TitleButton aria-label="환경설정"><Gear thin /></TitleButton>
          <Spacer />
          <TitleButton aria-label="최소화"><Icon s={12} w={2} d="M1 10h10" /></TitleButton>
          <TitleButton aria-label="최대화"><Icon s={12} w={2} d="M1 2h10v8H1z" /></TitleButton>
          <TitleButton aria-label="닫기"><Icon s={12} w={2} d="M1.500 1.500l9 9M10.500 1.500l-9 9" /></TitleButton>
        </TitleBar>

        <Bars>
          <Bar>
            <Group>
              <Tool $w={21} aria-label="처음"><Icon s={10} d="M5 2.500L2.500 5L5 7.500M8.500 2.500L6 5l2.500 2.500" /></Tool>
              <Tool $w={21} aria-label="위로"><Icon s={10} d="M2.500 5L5 2.500L7.500 5M2.500 8.500L5 6l2.500 2.500" /></Tool>
            </Group>
            <Tool>전</Tool>
            <Tool $w={33} $menu>업종</Tool>
            <Group>
              <Combo $w={85}>
                <select aria-label="시장"><option>KOSDAQ</option></select>
                <Drop $w={19}><Chevron /></Drop>
              </Combo>
              <CodeField $w={23} defaultValue="01" aria-label="업종코드" />
              <Tool $w={21} aria-label="검색"><Icon s={14} d="M11.500 5a3.500 3.500 0 1 1-7 0a3.500 3.500 0 1 1 7 0zM5.500 8l-3.500 4" /></Tool>
            </Group>
            <NameField $w={144} readOnly value="코스닥" aria-label="업종명" />
            <Group>
              {['일', '주', '월', '분', '틱', '년'].map((t, i) => <Tool key={t} $on={i === 0}>{t}</Tool>)}
            </Group>
            <Group>
              {['1', '3', '5', '10', '30', '60'].map(t => <NumTool key={t}>{t}</NumTool>)}
            </Group>
            <Combo $w={46} $dim>
              <select aria-label="간격"><option>1</option></select>
              <Drop $w={16}><Chevron /></Drop>
            </Combo>
            <Group>
              <Field $w={67} defaultValue="2023/11/06" aria-label="날짜" />
              <Tool aria-label="달력"><Icon s={12} d="M.5 1.500h11v10H.5zM.5 3.500h11M3 6.500h6M3 8.500h6" /></Tool>
            </Group>
            <Tool $dim>당</Tool>
            <Group>
              <Field $w={46} $right defaultValue="170" aria-label="표시 봉수" />
              <Spin>
                <button aria-label="늘리기"><Icon s={6} f="M0 5l3-4l3 4z" /></button>
                <button aria-label="줄이기"><Icon s={6} f="M0 1l3 4l3-4z" /></button>
              </Spin>
            </Group>
            <Slash>/</Slash>
            <Field $w={43} $right defaultValue="3000" aria-label="전체 봉수" />
            <Group>
              <Tool $w={22} aria-label="확대"><Icon s={14} d="M8.500 6a3 3 0 1 1-6 0a3 3 0 1 1 6 0zM7.500 8.500l3 3.500M11.500 1v5M9 3.500h5" /></Tool>
              <Tool $menu aria-label="설정"><Gear /></Tool>
            </Group>
            <More aria-label="더보기">»</More>
          </Bar>
          <Bar>
            <Group>
              <Tool $w={73} $menu>차트틀</Tool>
              <Tool $menu aria-label="저장"><Icon s={14} d="M1.500 1.500h11v11h-11zM4.500 1.500v4h5v-4M4.500 12.500v-4h5v4" /></Tool>
            </Group>
            <Tool $w={58} $menu>관심지표</Tool>
            <Group>
              <Tool aria-label="이전"><Icon s={8} f="M6 0v8L2 4z" /></Tool>
              <Tool $dim aria-label="정지"><Icon s={8} f="M1 1h6v6H1z" /></Tool>
              <Tool aria-label="다음"><Icon s={8} f="M2 0v8l4-4z" /></Tool>
              <Tool $menu>수</Tool>
            </Group>
            <Tool $w={46}>초기화</Tool>
            <Tool $w={19} aria-label="표"><Icon s={13} d="M.5.5h12v12H.5zM.5 4.500h12M.5 8.500h12M4.500.5v12M8.500.5v12" /></Tool>
            <Tool $w={19} aria-label="배치"><Icon s={13} d="M.5.5h12v12H.5zM.5 3.500h12M6.500 3.500v9M6.500 7.500h6" /></Tool>
            <Tool $w={19} aria-label="겹쳐보기"><Icon s={13} d="M1.500 3v7M.5 4.500l1-1M4 6.500h5M6.500 4.500v4M11.500 3v7M10.500 4.500l1-1" /></Tool>
            <Tool $menu aria-label="원화"><Icon s={10} w={1.4} d="M1.500 1l1.500 8l2-7l2 7L8.500 1M0 4.500h10" /></Tool>
            <Tool $w={22} aria-label="도구"><Icon s={12} w={2} d="M3.500 0v3l5 6v3M8.500 0v3l-5 6v3" /></Tool>
            <Tool $w={45}><Cycle />지표</Tool>
            <Tool $w={45} $dim><Cycle />종목</Tool>
            <Tool $w={45} $dim><Cycle />주기</Tool>
            <Tool $w={45}><Cycle />보기</Tool>
            <Tool $w={57}>보조기능</Tool>
            <Tool $w={57}>수식관리</Tool>
          </Bar>
        </Bars>

        <Body>
          <Side>
            <Tabs>
              <Tab>종목</Tab>
              <Tab $on>지표</Tab>
              <Tab>전략</Tab>
            </Tabs>
            <SearchRow>
              <SearchGroup>
                <SearchField $w={120} placeholder="스마트 검색" aria-label="스마트 검색" />
                <Tool aria-label="찾기"><Lens /></Tool>
              </SearchGroup>
              <Tool $w={19} aria-label="펼치기"><Icon s={10} d="M2.500 1.500L5 4l2.500-2.500M2.500 5.500L5 8l2.500-2.500" /></Tool>
            </SearchRow>
            <Fold>
              <Icon s={12} f="M0 1h5l1 2h6v8H0zM3 6v1h6V6z" />
              유형
            </Fold>
            <Tree>
              <Root>
                <Icon s={5} d="M.5 0v4.500H5" />
                차트유형
              </Root>
              {kinds.map(k => (
                <Choice key={k}>
                  <input type="radio" name="kind" checked={kind === k} onChange={() => setKind(k)} />
                  <ChoiceText>
                    {k.split(/([A-Za-z&-]+)/).map((part, i) => (i % 2 ? <Latin key={i}>{part}</Latin> : part))}
                  </ChoiceText>
                </Choice>
              ))}
            </Tree>
            {folds.map(f => (
              <Fold key={f}>
                <Icon s={12} d="M.5 1.500h4l1 1h6v9H.5zM3 6.500h6M6 4v5.500" />
                {f}
              </Fold>
            ))}
            <SideFoot>
              <span>관심지표</span>
              <Tool $w={38} $dim>등록</Tool>
              <Tool $w={38} $dim>삭제</Tool>
            </SideFoot>
          </Side>

          <Panel>
            <Quote>
              <Last>
                <Big $w={55}>839.45</Big>
                <Big $w={71}>▲57.40</Big>
                <Big $w={56}>+7.34%</Big>
                <Vol>849,326(<Hangul>천주</Hangul>)</Vol>
              </Last>
              <QLabel>시</QLabel><QValue>794.49</QValue>
              <QLabel>고</QLabel><QValue>839.45</QValue>
              <QLabel>저</QLabel><QValue>793.72</QValue>
              <QuoteTools>
                <span>[<Hangul>일</Hangul>]</span>
                <Tool aria-label="차트 설정"><Gear /></Tool>
                <Tool $w={31} $dim>매수</Tool>
                <Tool $w={31} $dim>매도</Tool>
                <Stack>
                  <button aria-label="크게"><Icon s={5} d="M.5.5h4v4h-4z" /></button>
                  <button aria-label="닫기"><Icon s={5} d="M0 0l5 5M5 0l-5 5" /></button>
                </Stack>
              </QuoteTools>
            </Quote>
            <Pane>
              <PriceChart />
              <Legend $top={1}>
                <Key $c="#000">대기매물</Key>
                <Key $c="#000" $b>종합</Key>
                <Key $c="#559a1e">가격이평 5</Key>
                <Key $c="#5555e6">10</Key>
                <Key $c="#d8000c">20</Key>
                <Key $c="#0000a0">60</Key>
                <Key $c="#6a1c4c">120</Key>
                <Key $c="#e8505a">240</Key>
              </Legend>
              <MiniSet keys="LIR" />
              <Mini $end><button aria-label="확대"><Square /></button></Mini>
            </Pane>
            <Pane>
              <VolumeChart />
              <Legend $top={2}>
                <Key $c="#000">거래량</Key>
                <Key $c="#559a1e">거래이평 5</Key>
                <Key $c="#2a7fc8">20</Key>
                <Key $c="#0000a0">60</Key>
                <Key $c="#6a1c4c">120</Key>
              </Legend>
              <MiniSet keys="LI" />
              <Mini $end><button aria-label="확대"><Square /></button><button aria-label="닫기"><Cross /></button></Mini>
            </Pane>
            <Pane>
              <MacdChart />
              <Legend $top={2}>
                <Key $c="#de6a1a">MACD(12,26,9,c)</Key>
                <Key $c="#2c62cc">Signal</Key>
                <Key $c="#f08cb8">MACD Osc</Key>
              </Legend>
              <MiniSet keys="LI" />
              <Mini $end><button aria-label="확대"><Square /></button><button aria-label="닫기"><Cross /></button></Mini>
            </Pane>
            <Pane><DateAxis /></Pane>
            <Foot>
              <ScrollButton aria-label="왼쪽으로"><Icon s={6} f="M5 0v6L1 3z" /></ScrollButton>
              <Track><Thumb /></Track>
              <ScrollButton aria-label="오른쪽으로"><Icon s={6} f="M1 0v6l4-3z" /></ScrollButton>
              <FootTools>
                <Spacer />
                <FootButton aria-label="처음"><Icon s={10} d="M1.500 1v8" f="M8 1v8L4 5z" /></FootButton>
                <FootButton $w={15} aria-label="일시정지"><Icon s={10} f="M2 1h2v8H2zM6 1h2v8H6z" /></FootButton>
                <FootButton aria-label="끝"><Icon s={10} d="M8.500 1v8" f="M2 1v8l4-4z" /></FootButton>
                <Ruler><input type="range" min="0" max="100" defaultValue="5" aria-label="속도" /></Ruler>
                <FootButton aria-label="축소"><Icon s={13} d="M12 6.500a5.500 5.500 0 1 1-11 0a5.500 5.500 0 1 1 11 0zM4 6.500h5" /></FootButton>
                <FootButton aria-label="확대"><Icon s={13} d="M12 6.500a5.500 5.500 0 1 1-11 0a5.500 5.500 0 1 1 11 0zM4 6.500h5M6.500 4v5" /></FootButton>
                <FootButton aria-label="글꼴"><Icon s={10} w={1.2} d="M1.500 9.500L5 1l3.500 8.500M2.500 6.500h5" /></FootButton>
                <FootButton aria-label="설정"><Gear /></FootButton>
                <FootButton aria-label="전략"><Icon s={12} d="M.5 1.500h4v2h-4zM6.500 1.500h5v3h-5zM4.500 2.500h2M3.500 3.500l2 3v5h2v-5l2-2" /></FootButton>
                <FootButton aria-label="엑셀"><Icon s={12} d="M4.500 5V.5h7v9h-5M6 3.500h4M6 5.500h4M6 7.500h4M0 5.500l5 6M5 5.500l-5 6" /></FootButton>
                <FootButton $on aria-label="목록"><Icon s={12} d="M.5 1.500h11v9H.5zM.5 3.500h11M3 5.500h2M7 5.500h2M3 7.500h2M7 7.500h2" /></FootButton>
                <FootButton aria-label="차트"><Icon s={12} d="M.5 1.500h11v9H.5zM.5 6.500h11M2 9.500l3-2l2 1l4-5" /></FootButton>
                <FootButton $on aria-label="십자선"><Icon s={11} d="M5.500 0v11M0 5.500h11" /></FootButton>
                <FootButton aria-label="겹치기"><Icon s={12} d="M4.500 2.500v-1h7v5h-1M2.500 4.500v-1h7v5h-1M.5 5.500h8v5h-8zM.5 7h8" /></FootButton>
                <FootButton aria-label="전체화면"><Icon s={12} d="M3.500 3.500h5v5h-5zM.5 3V.5H3M9 .5h2.500V3M11.500 9v2.500H9M3 11.500H.5V9M1 1l2.500 2.500M11 1L8.500 3.500M11 11L8.500 8.500M1 11l2.500-2.500" /></FootButton>
              </FootTools>
            </Foot>
          </Panel>

          <Strip aria-label="그리기 도구">
            {stripIcons.map(([name, icon], i) => (
              <StripButton key={name} aria-label={name} $on={i === 12} $rule={i === 1}>{icon}</StripButton>
            ))}
          </Strip>
        </Body>
      </Frame>
    </>
  );
}
